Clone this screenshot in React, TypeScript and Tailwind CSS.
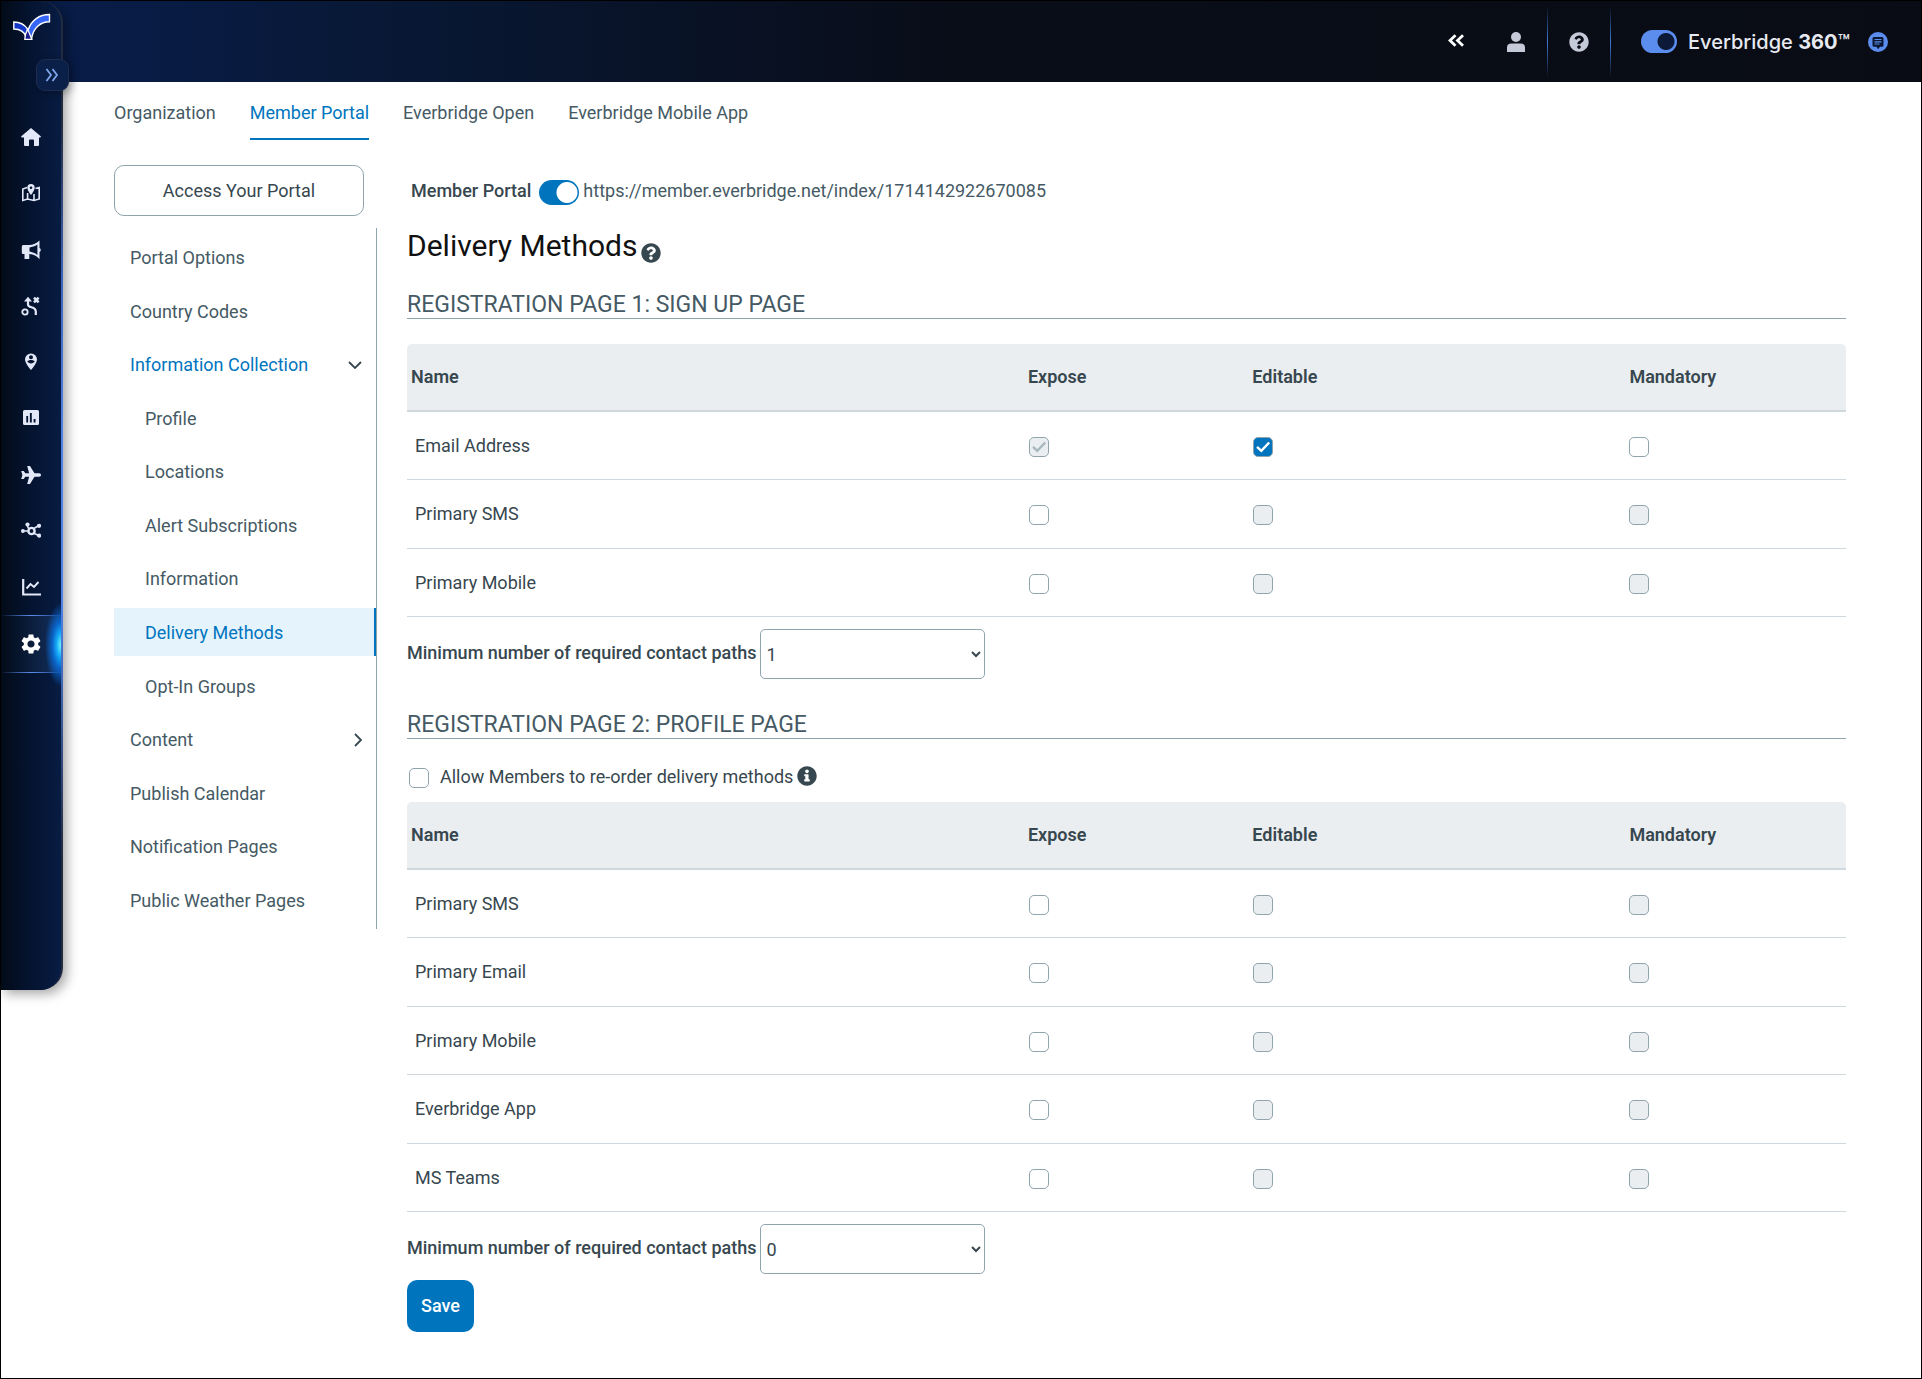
import { useState, type ReactNode } from 'react'

const navItems = [
  { label: 'Portal Options' },
  { label: 'Country Codes' },
  { label: 'Information Collection', open: true },
  { label: 'Profile', child: true },
  { label: 'Locations', child: true },
  { label: 'Alert Subscriptions', child: true },
  { label: 'Information', child: true },
  { label: 'Delivery Methods', child: true, active: true },
  { label: 'Opt-In Groups', child: true },
  { label: 'Content', closed: true },
  { label: 'Publish Calendar' },
  { label: 'Notification Pages' },
  { label: 'Public Weather Pages' },
]

type BoxState = 'on' | 'off' | 'disabled' | 'disabledOn'
type Row = { name: string; boxes: [BoxState, BoxState, BoxState] }

const signUpRows: Row[] = [
  { name: 'Email Address', boxes: ['disabledOn', 'on', 'off'] },
  { name: 'Primary SMS', boxes: ['off', 'disabled', 'disabled'] },
  { name: 'Primary Mobile', boxes: ['off', 'disabled', 'disabled'] },
]

const profileRows: Row[] = ['Primary SMS', 'Primary Email', 'Primary Mobile', 'Everbridge App', 'MS Teams'].map(
  (name) => ({ name, boxes: ['off', 'disabled', 'disabled'] }),
)

const columns = ['Expose', 'Editable', 'Mandatory']

function Icon({ children }: { children: ReactNode }) {
  return (
    <svg width="20" height="20" viewBox="0 0 20 20" fill="currentColor" aria-hidden="true">
      {children}
    </svg>
  )
}

const sideIcons: { label: string; art: ReactNode }[] = [
  {
    label: 'Home',
    art: <path d="M10 1 20 9.6 19.3 10.6H18V18q0 1-1 1h-4v-5.5q0-1-1-1H9q-1 0-1 1V19H4q-1 0-1-1v-7.400H.7L0 9.600Z" />,
  },
  {
    label: 'Map',
    art: (
      <>
        <path fill="none" stroke="currentColor" strokeWidth="1.600" d="M6 4.500 1.800 6v11.500L6.600 16l6.400 1.500 5.200-1.500V4.500L14.500 5.600M6.600 10v6M13 11v6" />
        <path fillRule="evenodd" d="M10 1a3.700 3.700 0 0 1 3.700 3.700C13.700 7.200 10 12 10 12S6.300 7.200 6.300 4.700A3.700 3.700 0 0 1 10 1Zm0 2.500a1.300 1.300 0 1 0 0 2.600 1.300 1.300 0 0 0 0-2.600Z" />
      </>
    ),
  },
  {
    label: 'Notifications',
    art: (
      <path
        fillRule="evenodd"
        d="M18.500.500V8q1.300.400 1.300 2t-1.300 2v7.200C16.500 16.500 12 14 8.300 14v5H3.500v-5H2q-1.200 0-1.200-1.200V6.500Q.8 5 2.300 5H8C12 5 16 3 18.500.500ZM16.400 4.500C14 6.200 11 7.200 8.500 7.400v4.200c2.800.300 5.500 1.600 7.900 3.300Z"
      />
    ),
  },
  {
    label: 'Plans',
    art: (
      <>
        <circle cx="4" cy="16" r="2.700" fill="none" stroke="currentColor" strokeWidth="1.800" />
        <path fill="none" stroke="currentColor" strokeWidth="2.200" d="M7 4v4.500c0 4 7.800 1.500 7.800 7V19" />
        <path d="M7 .8 11 5.500H3Z" />
        <path fill="none" stroke="currentColor" strokeWidth="2.600" d="m13 1.700 4.600 4.600m0-4.600L13 6.300" />
      </>
    ),
  },
  {
    label: 'People',
    art: (
      <path
        fillRule="evenodd"
        d="M10 1.500a6 6 0 0 1 6 6c0 4-6 10.500-6 10.500S4 11.500 4 7.500a6 6 0 0 1 6-6Zm0 1.800a2 2 0 1 0 0 4 2 2 0 0 0 0-4ZM6.300 9.600c.7 1 2.100 1.800 3.700 1.800s3-.8 3.700-1.800c-.5-1-2.300-1.500-3.700-1.500s-3.200.500-3.700 1.500Z"
      />
    ),
  },
  {
    label: 'Reports',
    art: (
      <path
        fillRule="evenodd"
        d="M3.500 2h13Q18 2 18 3.500v12q0 1.500-1.500 1.500h-13Q2 17 2 15.500v-12Q2 2 3.500 2ZM5.300 8v6.500h1.800V8Zm3.600-3v9.500h1.900V5Zm3.700 6v3.500h1.900V11Z"
      />
    ),
  },
  {
    label: 'Travel',
    art: (
      <path d="M20 10c0 1-.8 1.700-1.800 1.700h-4.700L9 19H6.200l1.900-7.300H4.300L2.700 14H.2L1.400 10 .2 6h2.500l1.600 2.300h3.800L6.200 1H9l4.500 7.300h4.700c1 0 1.800.7 1.800 1.700Z" />
    ),
  },
  {
    label: 'Network',
    art: (
      <>
        <path fill="none" stroke="currentColor" strokeWidth="1.600" d="M2 10h5m1-1.500L6 4m6 4 6-3.500M12 12l6 2.500" />
        <circle cx="10.500" cy="10" r="3.100" fill="none" stroke="currentColor" strokeWidth="2.400" />
        <circle cx="1.900" cy="10" r="1.900" />
        <circle cx="6.500" cy="3.500" r="2.100" />
        <circle cx="18" cy="4.800" r="2.100" />
        <circle cx="18" cy="14.600" r="2.100" />
      </>
    ),
  },
  {
    label: 'Analytics',
    art: (
      <>
        <path fill="none" stroke="currentColor" strokeWidth="2.200" d="M2.200 2v15.500H20" />
        <path fill="none" stroke="currentColor" strokeWidth="1.900" d="m5.500 11.500 4-4.500 3.500 3L17.500 5" />
      </>
    ),
  },
]

function GearIcon() {
  return (
    <svg width="24" height="24" viewBox="0 0 24 24" fill="currentColor" aria-hidden="true">
      <path d="M19.140 12.940c.040-.3.060-.610.060-.940 0-.320-.020-.640-.070-.940l2.030-1.580c.180-.140.230-.410.120-.610l-1.920-3.320c-.120-.220-.370-.290-.590-.220l-2.390.960c-.5-.380-1.030-.7-1.620-.940l-.360-2.540c-.040-.240-.240-.410-.480-.410h-3.840c-.240 0-.430.170-.470.410l-.360 2.540c-.590.240-1.130.570-1.620.940l-2.390-.960c-.220-.080-.470 0-.590.220L2.740 8.870c-.120.210-.080.470.120.610l2.030 1.580c-.050.300-.090.630-.090.940s.020.640.070.940l-2.030 1.580c-.180.140-.230.410-.120.610l1.920 3.320c.120.220.370.290.590.220l2.390-.960c.5.380 1.030.7 1.620.940l.360 2.540c.050.240.240.410.480.410h3.840c.240 0 .440-.170.470-.410l.360-2.540c.590-.240 1.130-.560 1.620-.940l2.390.960c.220.080.470 0 .590-.220l1.920-3.320c.120-.220.070-.470-.120-.610l-2.010-1.580zM12 15.600c-1.980 0-3.600-1.620-3.600-3.600s1.620-3.600 3.600-3.600 3.600 1.620 3.600 3.600-1.620 3.600-3.600 3.600z" />
    </svg>
  )
}

function HelpIcon() {
  return (
    <svg width="20" height="20" viewBox="0 0 512 512" fill="currentColor" aria-hidden="true">
      <path d="M504 256c0 136.997-111.043 248-248 248S8 392.997 8 256C8 119.083 119.043 8 256 8s248 111.083 248 248zM262.655 90c-54.497 0-89.255 22.957-116.549 63.758-3.536 5.286-2.353 12.415 2.715 16.258l34.699 26.310c5.205 3.947 12.621 3.008 16.665-2.122 17.864-22.658 30.113-35.797 57.303-35.797 20.429 0 45.698 13.148 45.698 32.958 0 14.976-12.363 22.667-32.534 33.976C247.128 238.528 216 254.941 216 296v4c0 6.627 5.373 12 12 12h56c6.627 0 12-5.373 12-12v-1.333c0-28.462 83.186-29.647 83.186-106.667 0-58.002-60.165-102-116.531-102zM256 338c-25.365 0-46 20.635-46 46 0 25.364 20.635 46 46 46s46-20.636 46-46c0-25.365-20.635-46-46-46z" />
    </svg>
  )
}

function InfoIcon() {
  return (
    <svg width="20" height="20" viewBox="0 0 512 512" fill="currentColor" aria-hidden="true">
      <path d="M256 8C119.043 8 8 119.083 8 256c0 136.997 111.043 248 248 248s248-111.003 248-248C504 119.083 392.957 8 256 8zm0 80c27 0 48 21 48 48s-21 48-48 48-48-21-48-48 21-48 48-48zm72 296c0 6.627-5.373 12-12 12h-120c-6.627 0-12-5.373-12-12v-32c0-6.627 5.373-12 12-12h16v-76h-16c-6.627 0-12-5.373-12-12v-32c0-6.627 5.373-12 12-12h88c6.627 0 12 5.373 12 12v120h20c6.627 0 12 5.373 12 12v32z" />
    </svg>
  )
}

function Logo() {
  return (
    <svg width="38" height="28" viewBox="0 0 38 28" aria-hidden="true">
      <path d="M.8 9C7 9 11.500 11.500 14.500 16L13 24C11.500 19 7 16 .8 16Z" fill="#1438c8" stroke="#fff" strokeWidth="1.400" />
      <path d="M36.500 1.500v7.300C27.500 8.800 20 15 18.500 26h-3C14 22 14 19 15.500 16 18.500 7.500 26 1.500 36.500 1.500Z" fill="#3566f6" stroke="#fff" strokeWidth="1.400" />
      <path d="M14.700 16.300 18.800 26.300H11.800C11.800 22 13 19 14.700 16.300Z" fill="#1a1a8c" stroke="#fff" strokeWidth="1.300" />
    </svg>
  )
}

function Checkbox({ state, label, id }: { state: BoxState; label?: string; id?: string }) {
  const [checked, setChecked] = useState(state === 'on' || state === 'disabledOn')
  return (
    <span className="relative block size-5">
      <input
        id={id}
        type="checkbox"
        aria-label={label}
        checked={checked}
        disabled={state === 'disabled' || state === 'disabledOn'}
        onChange={(e) => setChecked(e.target.checked)}
        className="peer block size-5 appearance-none rounded-[5px] border border-[#90a4ae] bg-white checked:bg-[#0075be] disabled:bg-[#ebeef1]"
      />
      <svg
        viewBox="0 0 20 20"
        fill="none"
        stroke="currentColor"
        strokeWidth="2.500"
        className="pointer-events-none absolute inset-0 hidden size-5 text-white peer-checked:block peer-disabled:text-[#a9b7be]"
        aria-hidden="true"
      >
        <path d="M4 9.800 8.300 13.800 16.200 5.500" />
      </svg>
    </span>
  )
}

function MethodsTable({ rows, caption }: { rows: Row[]; caption: string }) {
  return (
    <table className="w-full table-fixed border-separate border-spacing-0 text-left text-[#37474f]" aria-label={caption}>
      <colgroup>
        <col className="w-[42.8%]" />
        <col className="w-[15.6%]" />
        <col className="w-[26.2%]" />
        <col className="w-[15.4%]" />
      </colgroup>
      <thead>
        <tr className="h-[68px]">
          <th scope="col" className="rounded-tl-[5px] border-b-2 border-[#cfd8dc] bg-[#ebeef1] px-1 font-semibold">
            Name
          </th>
          {columns.map((c) => (
            <th key={c} scope="col" className="border-b-2 border-[#cfd8dc] bg-[#ebeef1] px-[5px] font-semibold last:rounded-tr-[5px]">
              {c}
            </th>
          ))}
        </tr>
      </thead>
      <tbody>
        {rows.map((row) => (
          <tr key={row.name} className="odd:h-[68px] even:h-[69px]">
            <td className="border-b border-[#cfd8dc] px-2">{row.name}</td>
            {row.boxes.map((state, i) => (
              <td key={columns[i]} className="border-b border-[#cfd8dc] px-[6px] pt-[2px] last:px-[5px]">
                <Checkbox state={state} label={`${row.name}: ${columns[i]}`} />
              </td>
            ))}
          </tr>
        ))}
      </tbody>
    </table>
  )
}

function SectionTitle({ children }: { children: ReactNode }) {
  return <h2 className="border-b border-[#90a4ae] pt-[2px] text-[23px] leading-[26px] text-[#455a64]">{children}</h2>
}

function MinimumPaths({ id, value }: { id: string; value: string }) {
  return (
    <div className="mt-3 flex items-center gap-1">
      <label htmlFor={id} className="pb-[2px] font-medium text-[#37474f]">
        Minimum number of required contact paths
      </label>
      <select id={id} defaultValue={value} className="h-[50px] w-[225px] rounded-[5px] border border-[#90a4ae] bg-white px-px text-[#37474f]">
        {['0', '1', '2', '3'].map((n) => (
          <option key={n}>{n}</option>
        ))}
      </select>
    </div>
  )
}

function HeaderDivider() {
  return <span className="h-[72px] w-px bg-[linear-gradient(to_bottom,transparent,#3f78d8,transparent)]" />
}

function Sidebar() {
  return (
    <aside className="relative z-10 h-[989px] w-[62px] shrink-0 rounded-r-[22px] bg-[linear-gradient(to_bottom,#232b3f_0px,#232b3f_120px,#3f66bd_280px,#4f83ea_440px,#4f83ea_600px,#232b3f_850px,#232b3f_989px)] pr-[2px] shadow-[4px_4px_12px_rgba(0,0,0,0.35)]">
      <div className="flex h-full flex-col rounded-r-[21px] bg-[linear-gradient(to_right,#020b18,#04122c_40%,#081c43)]">
        <a href="#top" aria-label="Everbridge" className="mt-3 ml-3">
          <Logo />
        </a>
        <nav aria-label="Main" className="mt-[68px]">
          <ul className="flex h-[506px] flex-col justify-between">
            {sideIcons.map((item) => (
              <li key={item.label}>
                <a href="#top" aria-label={item.label} className="flex h-14 items-center justify-center text-[#e3e8f8]">
                  <Icon>{item.art}</Icon>
                </a>
              </li>
            ))}
          </ul>
          <a
            href="#top"
            aria-label="Settings"
            aria-current="page"
            className="relative flex h-[58px] flex-col items-center justify-between bg-[linear-gradient(to_right,#020b18,#14305f)] text-white"
          >
            <span className="h-px w-full bg-[linear-gradient(to_right,transparent,#5b8def_50%,#1d3f80)]" />
            <GearIcon />
            <span className="h-px w-full bg-[linear-gradient(to_right,transparent,#5b8def_50%,#1d3f80)]" />
            <span className="absolute -top-3 right-0 h-[84px] w-4 bg-[radial-gradient(16px_42px_at_right,#6ff8ff_0%,#12a5f5_30%,#0a63c8_55%,transparent_100%)]" />
          </a>
        </nav>
      </div>
      <button
        type="button"
        aria-label="Expand menu"
        className="absolute top-[58px] left-[35px] flex h-8 w-[33px] items-center justify-center rounded-[9px] border border-[#1d2c50] bg-[#0a2049] pr-[2px] text-[#7fa6e8] shadow-[3px_3px_8px_rgba(0,0,0,0.3)]"
      >
        <svg width="14" height="14" viewBox="0 0 14 14" fill="none" stroke="currentColor" strokeWidth="1.800" aria-hidden="true">
          <path d="M1.500 1 6 7l-4.500 6M7.500 1 12 7l-4.500 6" />
        </svg>
      </button>
    </aside>
  )
}

function Header() {
  return (
    <header className="flex h-[81px] items-center justify-end pr-[33px] text-[#c5cad9]">
      <button type="button" aria-label="Collapse header" className="mr-[43px] pb-[2px] text-white">
        <svg width="16" height="14" viewBox="0 0 16 14" fill="none" stroke="currentColor" strokeWidth="2.800" aria-hidden="true">
          <path d="M7.500 1.200 2 6.500l5.500 5.300M15 1.200 9.500 6.500 15 11.800" />
        </svg>
      </button>
      <button type="button" aria-label="Account" className="mr-[22px]">
        <svg width="18" height="20" viewBox="0 0 18 20" fill="currentColor" aria-hidden="true">
          <circle cx="9" cy="5" r="5" />
          <path d="M0 20v-4.500Q0 11.500 4.500 11.500h9Q18 11.500 18 15.500V20Z" />
        </svg>
      </button>
      <HeaderDivider />
      <button type="button" aria-label="Help" className="mx-[21px] pt-px">
        <HelpIcon />
      </button>
      <HeaderDivider />
      <label className="ml-[30px] flex items-center gap-[11px] font-['Inter',sans-serif] text-xl font-medium text-[#e8eaf2]">
        <input
          type="checkbox"
          role="switch"
          defaultChecked
          className="h-[23px] w-9 appearance-none rounded-full bg-[#5b8def] bg-[radial-gradient(circle_at_25px_center,#0c1a38_8px,transparent_9px)]"
        />
        <span>
          Everbridge <b className="font-bold">360</b>™
        </span>
      </label>
      <button type="button" aria-label="Messages" className="ml-[18px]">
        <svg width="20" height="20" viewBox="0 0 20 20" aria-hidden="true">
          <circle cx="10" cy="10" r="10" fill="#5b8def" />
          <path d="M6 5h8q1.500 0 1.500 1.500v6.700q0 1.500-1.500 1.500h-2L10 17.200 8.500 14.700H6q-1.500 0-1.500-1.500V6.500Q4.500 5 6 5Z" fill="#0b1630" />
          <path d="M6.500 7.500h7M6.500 9.800h7M6.500 12h5" stroke="#5b8def" strokeWidth="1.200" />
        </svg>
      </button>
    </header>
  )
}

export default function App() {
  return (
    <div className="flex min-h-screen items-start border border-black bg-white bg-[linear-gradient(to_right,#081c47_0%,#081c47_5%,#081835_20%,#090d18_50%,#090c14_100%)] bg-[length:100%_81px] bg-no-repeat font-['Roboto',sans-serif] text-[18px] leading-6 text-[#455a64]">
      <Sidebar />
      <div className="min-w-0 flex-1">
        <Header />
        <div className="pr-[75px] pl-[51px]">
          <nav aria-label="Settings" className="flex gap-[34px]">
            <a href="#top" className="pt-[19px]">Organization</a>
            <a href="#top" aria-current="page" className="border-b-2 border-[#0075be] pt-[19px] pb-[13px] text-[#0075be]">
              Member Portal
            </a>
            <a href="#top" className="pt-[19px]">Everbridge Open</a>
            <a href="#top" className="pt-[19px]">Everbridge Mobile App</a>
          </nav>
          <div className="mt-[25px] flex items-start gap-[30px]">
            <div className="w-[263px] shrink-0">
              <button type="button" className="h-[51px] w-[250px] rounded-[10px] border border-[#90a4ae] text-[#37474f]">
                Access Your Portal
              </button>
              <nav aria-label="Portal settings" className="mt-3 border-r border-[#90a4ae] py-[5px]">
                <ul className="flex h-[691px] flex-col justify-between">
                  {navItems.map((item) => (
                    <li key={item.label}>
                      <a
                        href="#top"
                        aria-current={item.active ? 'page' : undefined}
                        className={[
                          'flex h-12 items-center justify-between pt-[2px] pr-[14px]',
                          item.child ? 'pl-[31px]' : 'pl-4',
                          item.active ? 'border-r-2 border-[#0075be] bg-[#e5f3fd] text-[#0075be]' : '',
                          item.open ? 'text-[#0075be]' : '',
                        ].join(' ')}
                      >
                        {item.label}
                        {item.open && (
                          <svg width="14" height="8" viewBox="0 0 14 8" fill="none" stroke="#37474f" strokeWidth="1.800" aria-hidden="true">
                            <path d="m1 1 6 6 6-6" />
                          </svg>
                        )}
                        {item.closed && (
                          <svg width="8" height="14" viewBox="0 0 8 14" fill="none" stroke="#37474f" strokeWidth="1.800" aria-hidden="true">
                            <path d="m1 1 6 6-6 6" />
                          </svg>
                        )}
                      </a>
                    </li>
                  ))}
                </ul>
              </nav>
            </div>
            <main className="min-w-0 flex-1">
              <div className="flex h-[52px] items-center pl-1">
                <label htmlFor="portal" className="mr-2 font-medium text-[#37474f]">
                  Member Portal
                </label>
                <input
                  id="portal"
                  type="checkbox"
                  role="switch"
                  defaultChecked
                  className="mt-[3px] mr-1 h-[25px] w-10 appearance-none rounded-full bg-[#0075be] bg-[radial-gradient(circle_at_28px_center,#fff_10px,transparent_11px)]"
                />
                <span>https://member.everbridge.net/index/1714142922670085</span>
              </div>
              <div className="mt-[11px] mb-[26px] flex items-end gap-1">
                <h1 className="text-[30px] leading-9 text-[#111]">Delivery Methods</h1>
                <button type="button" aria-label="Help" className="pb-px text-[#37474f]">
                  <HelpIcon />
                </button>
              </div>
              <SectionTitle>REGISTRATION PAGE 1: SIGN UP PAGE</SectionTitle>
              <div className="mt-[25px]">
                <MethodsTable rows={signUpRows} caption="Sign up page delivery methods" />
              </div>
              <MinimumPaths id="min-signup" value="1" />
              <div className="mt-[31px]">
                <SectionTitle>REGISTRATION PAGE 2: PROFILE PAGE</SectionTitle>
              </div>
              <div className="mt-[26px] mb-[13px] flex h-6 items-center pl-[2px] text-[#37474f]">
                <span className="pt-[2px]">
                  <Checkbox id="reorder" state="off" />
                </span>
                <label htmlFor="reorder" className="ml-[11px]">
                  Allow Members to re-order delivery methods
                </label>
                <button type="button" aria-label="More information" className="ml-1 pb-[3px]">
                  <InfoIcon />
                </button>
              </div>
              <MethodsTable rows={profileRows} caption="Profile page delivery methods" />
              <MinimumPaths id="min-profile" value="0" />
              <button type="button" className="mt-[6px] h-[52px] rounded-[10px] bg-[#0075be] px-[14px] font-medium text-white">
                Save
              </button>
            </main>
          </div>
        </div>
      </div>
    </div>
  )
}
